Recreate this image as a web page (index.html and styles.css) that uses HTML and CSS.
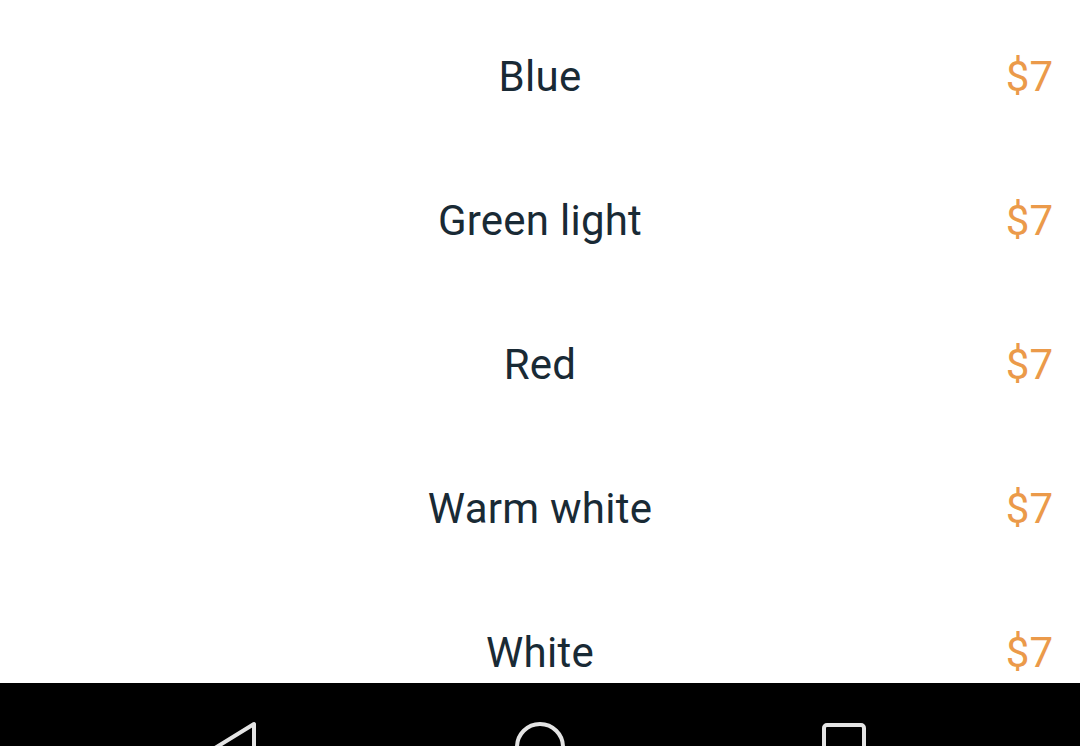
FILE: index.html
```html
<!DOCTYPE html>
<html>
<head>
<meta charset="utf-8">
<link rel="stylesheet" href="styles.css">
</head>
<body>
<div class="screen">
  <div class="list">
    <div class="row"><span class="name">Blue</span><span class="price">$7</span></div>
    <div class="row"><span class="name">Green light</span><span class="price">$7</span></div>
    <div class="row"><span class="name">Red</span><span class="price">$7</span></div>
    <div class="row"><span class="name">Warm white</span><span class="price">$7</span></div>
    <div class="row"><span class="name">White</span><span class="price">$7</span></div>
  </div>
  <div class="navbar">
    <svg class="nav-icon back" width="60" height="63" viewBox="0 0 60 63">
      <path d="M48 41 L48 89 L9 65 Z" fill="none" stroke="#e4e4e4" stroke-width="4" stroke-linejoin="round"/>
    </svg>
    <svg class="nav-icon home" width="60" height="63" viewBox="0 0 60 63">
      <circle cx="30" cy="64" r="23" fill="none" stroke="#e4e4e4" stroke-width="4"/>
    </svg>
    <svg class="nav-icon recent" width="60" height="63" viewBox="0 0 60 63">
      <rect x="10" y="42" width="40" height="40" rx="3" fill="none" stroke="#e4e4e4" stroke-width="4"/>
    </svg>
  </div>
</div>
</body>
</html>
```

FILE: styles.css
```css
html, body {
  margin: 0;
  padding: 0;
  background: #ffffff;
}

.screen {
  width: 1080px;
  height: 746px;
  display: flex;
  flex-direction: column;
  overflow: hidden;
  font-family: Roboto, "Noto Sans", sans-serif;
}

.list {
  height: 683px;
  overflow: hidden;
  padding-top: 5px;
  box-sizing: border-box;
}

.row {
  height: 144px;
  display: grid;
  grid-template-columns: 1fr auto 1fr;
  align-items: center;
  padding: 0 27px;
  font-size: 42px;
  line-height: 42px;
}

.name {
  grid-column: 2;
  color: #192a35;
  text-align: center;
  letter-spacing: 0.25px;
}

.price {
  grid-column: 3;
  justify-self: end;
  color: #eb9a4a;
}

.navbar {
  height: 63px;
  background: #000000;
  display: flex;
  justify-content: center;
  gap: 244px;
  overflow: hidden;
}

.nav-icon {
  display: block;
}
```
